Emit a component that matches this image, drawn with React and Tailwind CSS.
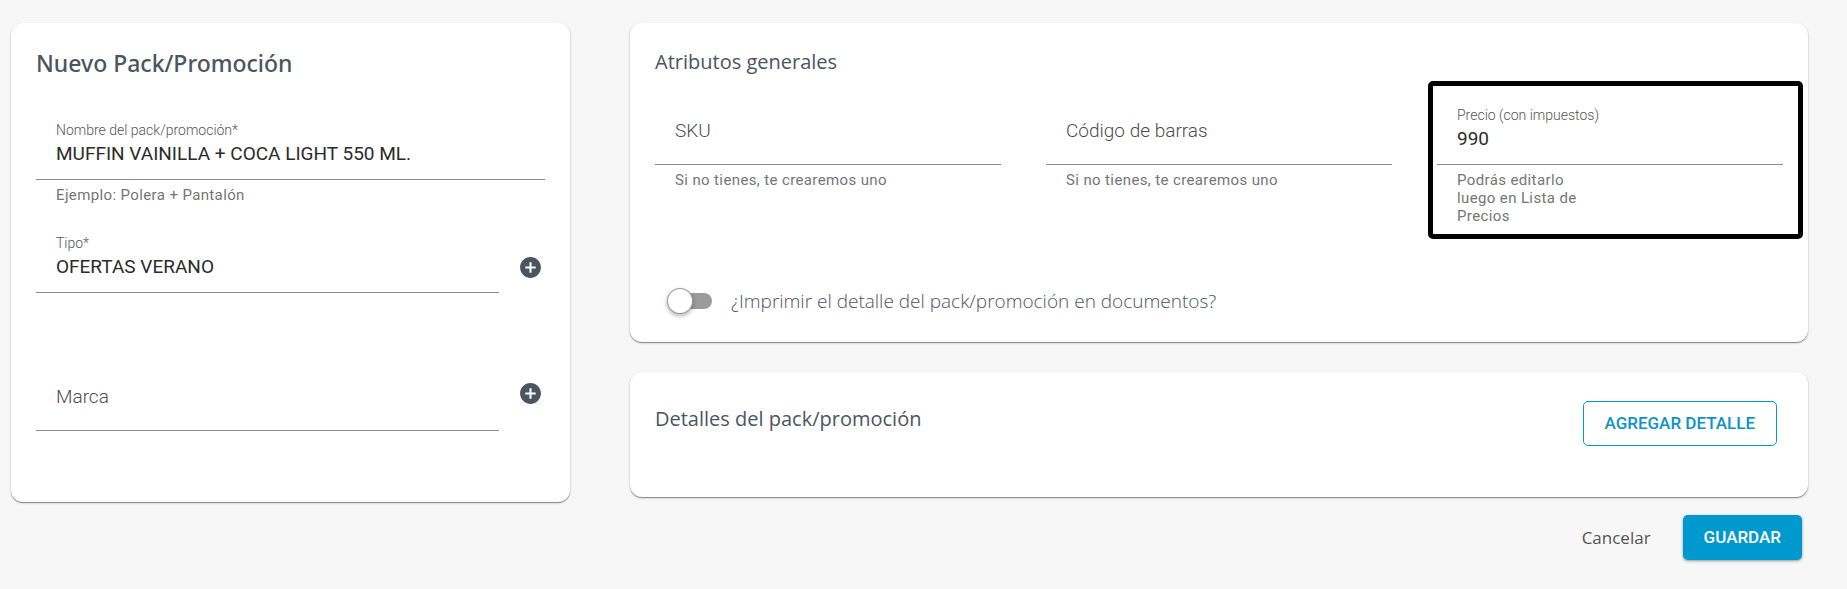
import React, { useState } from 'react';
import { MdAddCircle } from 'react-icons/md';

const Card = ({ className = '', children }) => (
  <section
    className={`bg-white rounded-xl shadow-[0_1px_1px_0_rgba(0,0,0,0.4),0_1px_3px_0_rgba(0,0,0,0.14)] ${className}`}
  >
    {children}
  </section>
);

const Field = ({ id, label, helper, initial = '', className = '' }) => {
  const [value, setValue] = useState(initial);
  const floating = initial !== '' || value !== '';

  return (
    <div className={`font-['Roboto',sans-serif] ${className}`}>
      <div className="grid h-[61px] border-b border-[#8c8c8c]">
        <label
          htmlFor={id}
          className={`col-start-1 row-start-1 px-5 font-light ${
            floating
              ? 'self-start pt-px text-sm leading-5 text-[#555555]'
              : 'self-center pb-1.5 text-[19px] leading-7 text-[#4d4d4d]'
          }`}
        >
          {label}
        </label>
        <input
          id={id}
          type="text"
          value={value}
          onChange={(e) => setValue(e.target.value)}
          className="col-start-1 row-start-1 mb-[11px] h-7 w-full min-w-0 self-end bg-transparent px-5 text-[19px] leading-7 text-[#2b2b2b] outline-none"
        />
      </div>
      {helper && (
        <p className="mt-1.5 ml-5 text-[15px] leading-[18px] tracking-wide text-[#757575]">{helper}</p>
      )}
    </div>
  );
};

const AddButton = ({ label, className = '' }) => (
  <button type="button" aria-label={label} className={`mr-0.5 self-start text-[#4a5560] ${className}`}>
    <MdAddCircle size={25} />
  </button>
);

const App = () => {
  const [printDetail, setPrintDetail] = useState(false);

  return (
    <div className="min-h-screen bg-[#f7f7f7] pt-[23px] pr-[39px] pl-[11px] font-['Open_Sans',sans-serif] text-[#4a5560]">
      <main className="grid grid-cols-[559fr_1178fr] items-start gap-x-[60px]">
        {/* Pack data */}
        <Card className="px-[25px] pt-6 pb-[71px]">
          <h1 className="font-['Noto_Sans',sans-serif] text-[23px] leading-8 font-medium">
            Nuevo Pack/Promoción
          </h1>
          <Field
            id="nombre"
            label="Nombre del pack/promoción*"
            helper="Ejemplo: Polera + Pantalón"
            initial="MUFFIN VAINILLA + COCA LIGHT 550 ML."
            className="mt-10"
          />
          <div className="mt-7 flex gap-[19px]">
            <Field id="tipo" label="Tipo*" initial="OFERTAS VERANO" className="flex-1" />
            <AddButton label="Agregar tipo" className="pt-[23px]" />
          </div>
          <div className="mt-[77px] flex gap-[19px]">
            <Field id="marca" label="Marca" className="flex-1" />
            <AddButton label="Agregar marca" className="pt-[11px]" />
          </div>
        </Card>

        <div>
          {/* General attributes */}
          <Card className="px-[25px] pt-[25px] pb-[27px]">
            <h2 className="text-xl leading-7">Atributos generales</h2>
            <div className="mt-7 grid grid-cols-3 gap-x-[45px]">
              <Field id="sku" label="SKU" helper="Si no tienes, te crearemos uno" />
              <Field id="codigo" label="Código de barras" helper="Si no tienes, te crearemos uno" />
              <div className="relative">
                <Field
                  id="precio"
                  label="Precio (con impuestos)"
                  initial="990"
                  helper={
                    <>
                      Podrás editarlo
                      <br />
                      luego en Lista de
                      <br />
                      Precios
                    </>
                  }
                />
                <div className="pointer-events-none absolute -top-[23px] -right-5 -bottom-3.5 -left-[9px] rounded-[5px] border-5 border-black" />
              </div>
            </div>
            <label className="mt-[62px] flex items-center gap-[19px] pl-5 text-[19px] leading-7 font-light">
              <input
                type="checkbox"
                role="switch"
                checked={printDetail}
                onChange={(e) => setPrintDetail(e.target.checked)}
                className="flex h-4 w-[37px] appearance-none items-center rounded-full bg-[#9b9b9b] before:-ml-[7px] before:size-6 before:shrink-0 before:rounded-full before:bg-white before:shadow-[0_0_0_1px_#9b9b9b,0_2px_4px_1px_rgba(0,0,0,0.3)] checked:justify-end checked:bg-[#0099cf]"
              />
              ¿Imprimir el detalle del pack/promoción en documentos?
            </label>
          </Card>

          {/* Pack details */}
          <Card className="mt-[30px] flex items-start justify-between pt-[29px] pr-[31px] pb-[51px] pl-[25px]">
            <h2 className="text-xl leading-9">Detalles del pack/promoción</h2>
            <button
              type="button"
              className="h-[45px] rounded-[5px] border border-[#0099cf] px-[21px] font-['Roboto',sans-serif] text-[17px] font-medium text-[#0e93c9]"
            >
              AGREGAR DETALLE
            </button>
          </Card>

          <div className="mt-[18px] flex items-center justify-end gap-8 pr-1.5">
            <button type="button" className="text-[17px] text-[#555555]">
              Cancelar
            </button>
            <button
              type="submit"
              className="h-[45px] rounded-[5px] bg-[#0099cf] px-[21px] font-['Roboto',sans-serif] text-[17px] font-medium text-white shadow-[0_1px_3px_0_rgba(0,0,0,0.4)]"
            >
              GUARDAR
            </button>
          </div>
        </div>
      </main>
    </div>
  );
};

export default App;
